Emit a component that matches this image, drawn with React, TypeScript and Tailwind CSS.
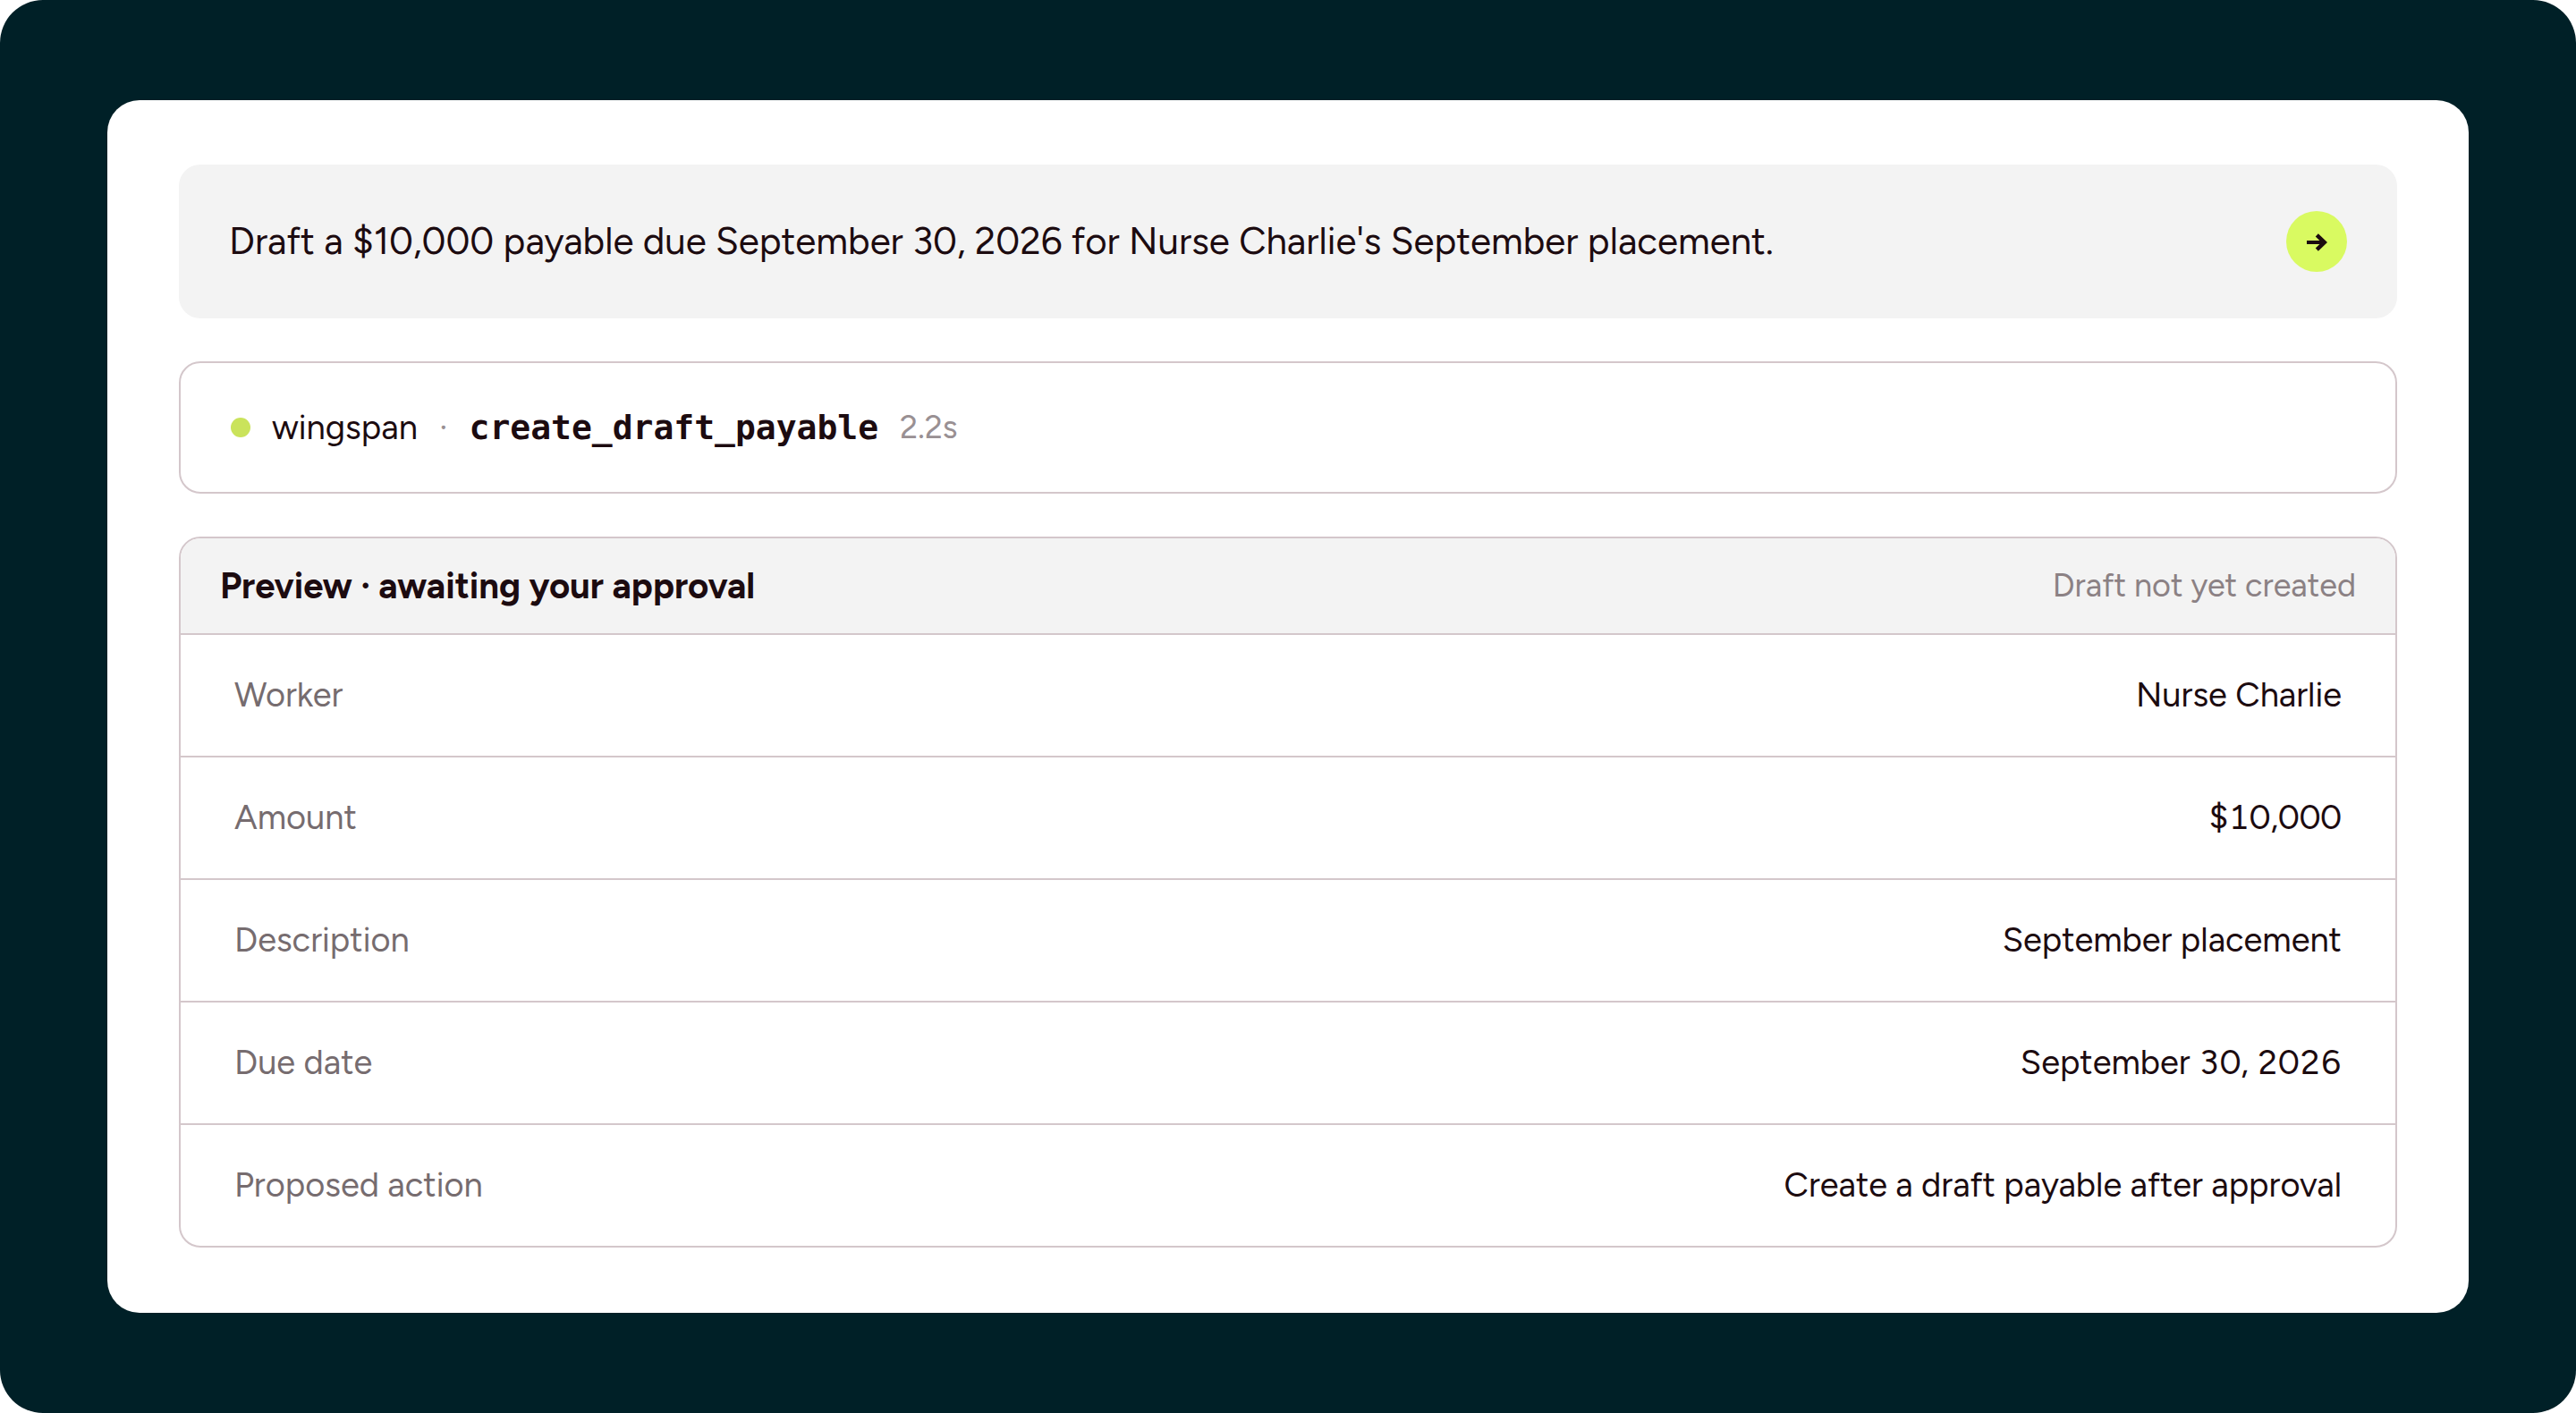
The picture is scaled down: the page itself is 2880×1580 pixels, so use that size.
import { useState, type FormEvent } from "react";

type PreviewRow = {
  label: string;
  value: string;
};

const DEFAULT_PROMPT =
  "Draft a $10,000 payable due September 30, 2026 for Nurse Charlie's September placement.";

const PREVIEW_ROWS: PreviewRow[] = [
  { label: "Worker", value: "Nurse Charlie" },
  { label: "Amount", value: "$10,000" },
  { label: "Description", value: "September placement" },
  { label: "Due date", value: "September 30, 2026" },
  { label: "Proposed action", value: "Create a draft payable after approval" },
];

function ArrowIcon() {
  return (
    <svg
      viewBox="0 0 24 24"
      className="h-6 w-6"
      fill="none"
      stroke="currentColor"
      strokeWidth="4.5"
      aria-hidden="true"
    >
      <path d="M1 13H20" strokeWidth="4" />
      <path d="M12.3 4.9 20.8 13l-8.5 8.1" />
    </svg>
  );
}

function PromptBox() {
  const [prompt, setPrompt] = useState(DEFAULT_PROMPT);

  function handleSubmit(event: FormEvent<HTMLFormElement>) {
    event.preventDefault();
  }

  return (
    <form
      onSubmit={handleSubmit}
      className="flex items-center gap-6 rounded-3xl bg-[#f3f3f3] px-14 py-[52px]"
    >
      <input
        type="text"
        aria-label="Prompt"
        value={prompt}
        onChange={(event) => setPrompt(event.target.value)}
        className="min-w-0 flex-1 bg-transparent text-[42px] leading-[56px] focus:outline-none"
      />
      <button
        type="submit"
        aria-label="Send"
        className="flex h-17 w-17 shrink-0 items-center justify-center rounded-full bg-[#d9fa61]"
      >
        <ArrowIcon />
      </button>
    </form>
  );
}

function ToolCall() {
  return (
    <div className="flex items-center gap-6 rounded-3xl border-2 border-[#d4c7cb] px-14 py-11 text-[38px] leading-[56px]">
      <span className="h-[22px] w-[22px] shrink-0 rounded-full bg-[#cae35b]" />
      <span>wingspan</span>
      <span className="text-[#999093]">·</span>
      <code className="font-['DejaVu_Sans_Mono',monospace] font-bold">create_draft_payable</code>
      <span className="text-[36px] text-[#999093]">2.2s</span>
    </div>
  );
}

function Preview() {
  return (
    <section className="overflow-hidden rounded-3xl border-2 border-[#d4c7cb]">
      <header className="flex items-center justify-between border-b-2 border-[#d4c7cb] bg-[#f3f3f3] px-11 py-[25px] leading-[56px]">
        <h2 className="text-[40px] font-bold">Preview · awaiting your approval</h2>
        <span className="text-[36px] text-[#8b8184]">Draft not yet created</span>
      </header>
      <table className="w-full text-[38px] leading-[55px]">
        <tbody>
          {PREVIEW_ROWS.map((row) => (
            <tr key={row.label} className="border-b-2 border-[#d4c7cb] last:border-b-0">
              <th scope="row" className="py-10 pl-15 text-left font-normal text-[#766c6f]">
                {row.label}
              </th>
              <td className="py-10 pr-15 text-right tabular-nums">{row.value}</td>
            </tr>
          ))}
        </tbody>
      </table>
    </section>
  );
}

export default function App() {
  return (
    <div className="bg-white">
      <div className="flex min-h-screen flex-col rounded-[48px] bg-[#002027] px-30 py-28 font-['Figtree','Inter',sans-serif] text-[#1c0b10]">
        <main className="flex flex-1 flex-col gap-12 rounded-[36px] bg-white px-20 py-18">
          <PromptBox />
          <ToolCall />
          <Preview />
        </main>
      </div>
    </div>
  );
}
